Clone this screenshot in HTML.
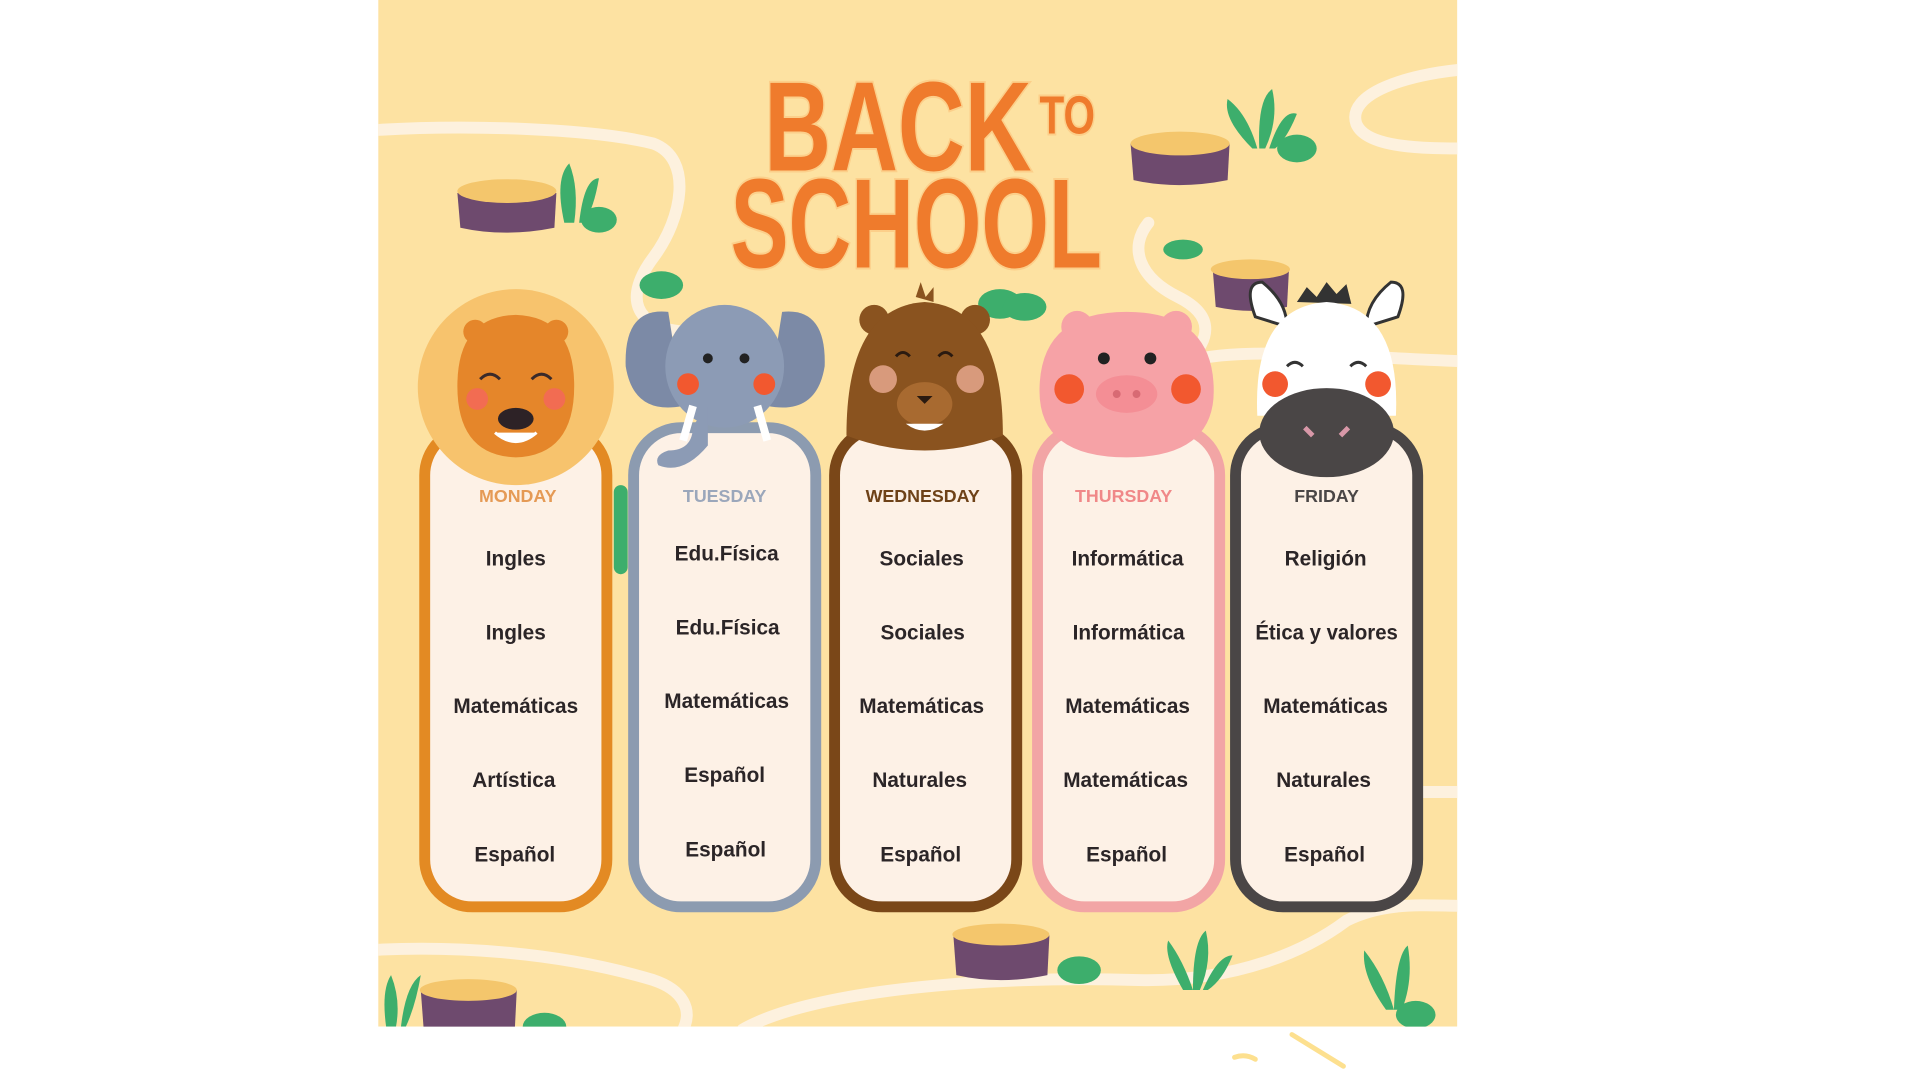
<!DOCTYPE html>
<html><head><meta charset="utf-8"><style>
html,body{margin:0;padding:0;background:#fff;width:1920px;height:1080px;overflow:hidden}
svg{display:block}
.t{font-family:"Liberation Sans",sans-serif;font-weight:bold;fill:#2b2527;font-size:21px;text-anchor:middle}
.d{font-family:"Liberation Sans",sans-serif;font-weight:bold;font-size:18px;text-anchor:middle}
.ti{font-family:"Liberation Sans",sans-serif;font-weight:bold;fill:#ef7b2c;stroke:#fccf8a;stroke-width:4;paint-order:stroke}
</style></head><body>
<svg width="1920" height="1080" viewBox="0 0 1920 1080">
<defs><clipPath id="c"><rect x="382" y="0" width="1090" height="1037"/></clipPath></defs>
<g transform="scale(0.99)">
<g clip-path="url(#c)">
<rect x="382" y="0" width="1090" height="1037" fill="#fde2a2"/>
<g fill="none" stroke="#fdf1de" stroke-width="12" stroke-linecap="round">
<path d="M370 132 C470 125 600 130 660 145 C700 160 690 220 660 260 C630 300 640 330 690 335"/>
<path d="M1480 70 C1420 75 1360 95 1370 125 C1380 150 1440 150 1480 150"/>
<path d="M1160 225 C1140 250 1150 280 1190 300 C1230 320 1220 345 1200 365 C1250 350 1350 360 1480 365"/>
<path d="M370 960 C450 955 560 960 660 990 C690 1000 700 1020 690 1040"/>
<path d="M750 1040 C820 1000 1000 985 1150 990 C1250 992 1320 960 1360 930 C1400 910 1440 915 1480 915"/>
<path d="M1400 800 L1480 800"/>
</g>
<g>
<path d="M462 195 L465 230 Q510 240 560 230 L562 195 Z" fill="#6e4a6e"/><ellipse cx="512" cy="193" rx="50" ry="12" fill="#f4c66c"/>
<path d="M1142 145 L1145 182 Q1190 192 1240 182 L1242 145 Z" fill="#6e4a6e"/><ellipse cx="1192" cy="145" rx="50" ry="12" fill="#f4c66c"/>
<path d="M1225 272 L1228 310 Q1265 318 1300 310 L1302 272 Z" fill="#6e4a6e"/><ellipse cx="1263" cy="272" rx="40" ry="10" fill="#f4c66c"/>
<path d="M963 945 L966 985 Q1010 995 1058 985 L1060 945 Z" fill="#6e4a6e"/><ellipse cx="1011" cy="944" rx="49" ry="11" fill="#f4c66c"/>
<path d="M425 1000 L428 1040 L520 1040 L522 1000 Z" fill="#6e4a6e"/><ellipse cx="473" cy="1000" rx="49" ry="11" fill="#f4c66c"/>
</g>
<g fill="#3dae6c">
<path d="M570 225 Q560 180 575 165 Q585 190 580 225Z"/><path d="M585 225 Q590 180 605 180 Q600 210 590 225Z"/><ellipse cx="605" cy="222" rx="18" ry="13"/>
<path d="M1265 150 Q1235 120 1240 100 Q1260 115 1270 150Z"/><path d="M1272 150 Q1270 100 1285 90 Q1292 120 1278 150Z"/><path d="M1282 150 Q1295 110 1310 115 Q1300 140 1288 150Z"/><ellipse cx="1310" cy="150" rx="20" ry="14"/>
<ellipse cx="668" cy="288" rx="22" ry="14"/><ellipse cx="1010" cy="307" rx="22" ry="15"/><ellipse cx="1035" cy="310" rx="22" ry="14"/><ellipse cx="1195" cy="252" rx="20" ry="10"/>
<path d="M1195 1000 Q1175 965 1180 950 Q1195 970 1205 1000Z"/><path d="M1205 1000 Q1205 950 1218 940 Q1225 970 1212 1000Z"/><path d="M1215 1000 Q1230 965 1245 965 Q1235 990 1220 1000Z"/>
<path d="M1400 1020 Q1375 985 1378 960 Q1398 985 1408 1020Z"/><path d="M1408 1020 Q1410 965 1422 955 Q1428 990 1416 1020Z"/><ellipse cx="1430" cy="1025" rx="20" ry="14"/>
<path d="M390 1037 Q385 1000 395 985 Q405 1010 400 1037Z"/><path d="M405 1037 Q410 995 425 985 Q420 1015 410 1037Z"/><ellipse cx="550" cy="1037" rx="22" ry="14"/><ellipse cx="1090" cy="980" rx="22" ry="14"/>
<rect x="620" y="490" width="14" height="90" rx="7"/>
</g>
<text class="ti" x="772" y="172" font-size="128" textLength="270" lengthAdjust="spacingAndGlyphs">BACK</text>
<text class="ti" x="1050" y="135" font-size="54" textLength="56" lengthAdjust="spacingAndGlyphs">TO</text>
<text class="ti" x="738" y="270" font-size="128" textLength="375" lengthAdjust="spacingAndGlyphs">SCHOOL</text>
<g fill="#fdf1e6" stroke-width="11">
<rect x="429" y="432" width="184" height="484" rx="48" stroke="#e38a23"/>
<rect x="640" y="432" width="184" height="484" rx="48" stroke="#8c9bb0"/>
<rect x="843" y="432" width="184" height="484" rx="48" stroke="#7a4718"/>
<rect x="1048" y="432" width="184" height="484" rx="48" stroke="#f2a5a5"/>
<rect x="1248" y="432" width="184" height="484" rx="48" stroke="#4a4646"/>
</g>
<circle cx="521" cy="391" r="99" fill="#f7c36d"/>
<path d="M462 390 Q462 320 521 318 Q580 320 580 390 Q580 460 521 462 Q462 460 462 390Z" fill="#e5862a"/>
<circle cx="480" cy="335" r="12" fill="#e5862a"/><circle cx="562" cy="335" r="12" fill="#e5862a"/>
<circle cx="482" cy="403" r="11" fill="#f26c52"/><circle cx="560" cy="403" r="11" fill="#f26c52"/>
<path d="M485 383 q10 -10 20 0 M537 383 q10 -10 20 0" stroke="#3a2a2a" stroke-width="3" fill="none"/>
<ellipse cx="521" cy="423" rx="18" ry="11" fill="#2d2226"/>
<path d="M500 437 Q521 455 542 437" fill="#fff" stroke="#fff" stroke-width="3"/>
<path d="M675 315 Q630 310 632 370 Q640 420 690 410Z" fill="#7c8aa6"/><path d="M790 315 Q835 310 833 370 Q825 420 775 410Z" fill="#7c8aa6"/>
<ellipse cx="732" cy="370" rx="60" ry="62" fill="#8c9bb5"/>
<path d="M715 410 L715 450 Q690 480 665 470 Q660 460 675 455 Q700 455 700 430Z" fill="#8c9bb5"/>
<path d="M700 410 L690 445 M765 410 L775 445" stroke="#fff" stroke-width="8"/>
<circle cx="715" cy="362" r="5" fill="#222"/><circle cx="752" cy="362" r="5" fill="#222"/>
<circle cx="695" cy="388" r="11" fill="#f2582f"/><circle cx="772" cy="388" r="11" fill="#f2582f"/>
<circle cx="883" cy="323" r="15" fill="#8a531f"/><circle cx="985" cy="323" r="15" fill="#8a531f"/>
<path d="M855 440 Q855 310 934 305 Q1013 310 1013 440 Q934 470 855 440Z" fill="#8a531f"/>
<path d="M925 300 l5 -15 l5 15 l8 -10 l0 15Z" fill="#8a531f"/>
<circle cx="892" cy="383" r="14" fill="#d89a7c"/><circle cx="980" cy="383" r="14" fill="#d89a7c"/>
<path d="M905 360 q7 -8 14 0 M948 360 q7 -8 14 0" stroke="#2a1a10" stroke-width="3" fill="none"/>
<ellipse cx="934" cy="408" rx="28" ry="22" fill="#a86a30"/>
<path d="M926 400 h16 l-8 8z" fill="#2a1a10"/>
<path d="M915 428 Q934 442 953 428" fill="#fff"/>
<circle cx="1088" cy="330" r="16" fill="#f6a2a6"/><circle cx="1188" cy="330" r="16" fill="#f6a2a6"/>
<path d="M1050 395 Q1050 315 1138 315 Q1226 315 1226 395 Q1226 462 1138 462 Q1050 462 1050 395Z" fill="#f6a2a6"/>
<circle cx="1115" cy="362" r="6" fill="#222"/><circle cx="1162" cy="362" r="6" fill="#222"/>
<circle cx="1080" cy="393" r="15" fill="#f2582f"/><circle cx="1198" cy="393" r="15" fill="#f2582f"/>
<ellipse cx="1138" cy="398" rx="31" ry="19" fill="#f48e95"/>
<circle cx="1128" cy="398" r="4" fill="#d86a74"/><circle cx="1148" cy="398" r="4" fill="#d86a74"/>
<path d="M1268 320 Q1255 285 1275 285 Q1300 305 1300 330Z" fill="#fff" stroke="#333" stroke-width="3"/>
<path d="M1412 320 Q1425 285 1405 285 Q1380 305 1380 330Z" fill="#fff" stroke="#333" stroke-width="3"/>
<path d="M1310 305 l10 -15 l10 10 l10 -15 l10 12 l10 -10 l5 20Z" fill="#333"/>
<path d="M1270 420 Q1265 310 1340 305 Q1415 310 1410 420Z" fill="#fff"/>
<circle cx="1288" cy="388" r="13" fill="#f2582f"/><circle cx="1392" cy="388" r="13" fill="#f2582f"/>
<path d="M1300 370 q8 -8 16 0 M1364 370 q8 -8 16 0" stroke="#333" stroke-width="3" fill="none"/>
<ellipse cx="1340" cy="437" rx="68" ry="45" fill="#4a4646"/>
<path d="M1318 432 l8 8 M1362 432 l-8 8" stroke="#d898a8" stroke-width="5"/>
<text class="d" x="523" y="507" fill="#e59a55">MONDAY</text>
<text class="d" x="732" y="507" fill="#9ba7bb">TUESDAY</text>
<text class="d" x="932" y="507" fill="#6e4218">WEDNESDAY</text>
<text class="d" x="1135" y="507" fill="#f08888">THURSDAY</text>
<text class="d" x="1340" y="507" fill="#4a4646">FRIDAY</text>
<g class="t">
<text x="521" y="571">Ingles</text><text x="521" y="646">Ingles</text><text x="521" y="720">Matemáticas</text><text x="519" y="795">Artística</text><text x="520" y="870">Español</text>
<text x="734" y="566">Edu.Física</text><text x="735" y="641">Edu.Física</text><text x="734" y="715">Matemáticas</text><text x="732" y="790">Español</text><text x="733" y="865">Español</text>
<text x="931" y="571">Sociales</text><text x="932" y="646">Sociales</text><text x="931" y="720">Matemáticas</text><text x="929" y="795">Naturales</text><text x="930" y="870">Español</text>
<text x="1139" y="571">Informática</text><text x="1140" y="646">Informática</text><text x="1139" y="720">Matemáticas</text><text x="1137" y="795">Matemáticas</text><text x="1138" y="870">Español</text>
<text x="1339" y="571">Religión</text><text x="1340" y="646" textLength="144" lengthAdjust="spacingAndGlyphs">Ética y valores</text><text x="1339" y="720">Matemáticas</text><text x="1337" y="795">Naturales</text><text x="1338" y="870">Español</text>
</g>
</g>
<path d="M1247 1068 Q1258 1064 1268 1070" stroke="#fde08f" stroke-width="5" fill="none" stroke-linecap="round"/>
<path d="M1305 1045 L1357 1077" stroke="#fde08f" stroke-width="5" fill="none" stroke-linecap="round"/>
</g>
</svg>
</body></html>
